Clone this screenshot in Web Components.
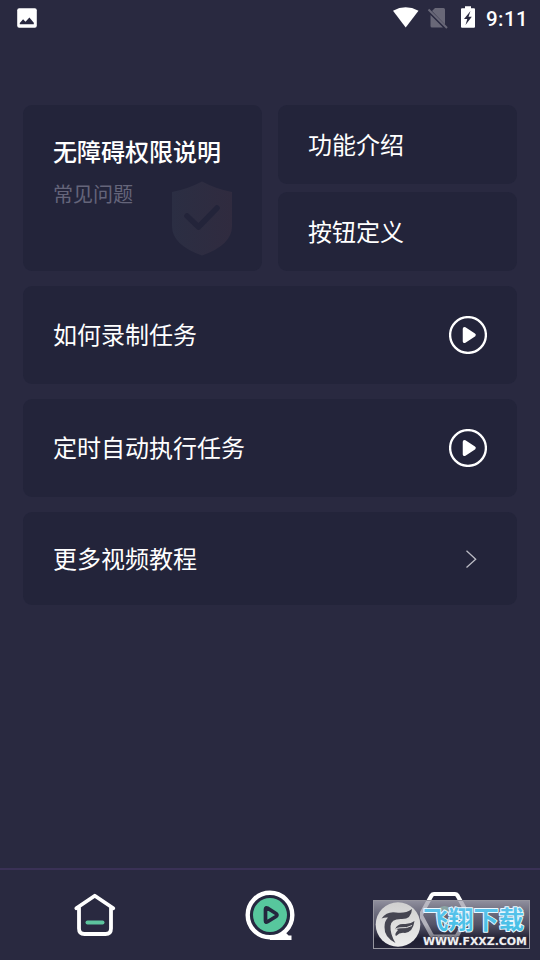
<!DOCTYPE html>
<html lang="zh-CN">
<head>
<meta charset="utf-8">
<title>教程</title>
<style>
html,body{margin:0;height:100%;background:#292940}
body{font-family:"Noto Sans CJK SC",sans-serif;color:#fff;overflow:hidden}
</style>
</head>
<body>
<tutorial-app></tutorial-app>
<script>
function define(name, html) {
  const template = document.createElement('template');
  template.innerHTML = html;
  customElements.define(name, class extends HTMLElement {
    constructor() {
      super();
      this.attachShadow({mode: 'open'}).append(template.content.cloneNode(true));
    }
  });
}

define('status-bar', `
<style>
:host{display:flex;height:36px;box-sizing:border-box;padding:0 12px 0 17px;align-items:center;justify-content:space-between}
svg{display:block}
.right{display:flex;align-items:center}
.time{font:500 20.5px/36px Roboto,sans-serif;letter-spacing:.4px;margin-left:10px;padding-top:1px;height:35px}
</style>
<svg width="20" height="20" viewBox="0 0 20 20"><rect x=".2" y=".2" width="19.6" height="19.6" rx="2" fill="#fff"/><path d="M2.8 16.2V15l3.3-3.7 2.4 2.5 3.9-4.4 4.4 5.3v1.5z" fill="#292940"/></svg>
<div class="right">
<svg width="83" height="24" viewBox="0 0 83 24">
<path d="M-.5 4.2Q12-2.500 25 4.200L12.200 21Z" transform="translate(.5 .5)" fill="#fff"/>
<path d="M39 5L42 2H50.500q1.500 0 1.500 1.500V18.500zM37.500 9l12.500 12.500H39q-1.500 0-1.500-1.500z" fill="#696878"/>
<path d="M35.500 3.500l18.500 18.500" stroke="#696878" stroke-width="1.900"/>
<path d="M69 2.200h3V.2h6v2h3q1 0 1 1v17.600q0 1-1 1H69q-1 0-1-1V3.200q0-1 1-1z" fill="#fff"/>
<path d="M77.500 5L71 13h3.300L72.500 19l6.300-8.300h-3.300z" fill="#292940"/>
</svg><span class="time">9:11</span></div>`);

define('tile-card', `
<style>
:host{display:flex;align-items:center;justify-content:space-between;box-sizing:border-box;padding:0 30px;border-radius:9px;background:#23243a;font-size:24px;line-height:34px}
.label{padding-bottom:2px}
</style><div class="label"><slot></slot></div><slot name="icon"></slot>`);

define('feature-card', `
<style>
:host{display:block;position:relative;box-sizing:border-box;padding:28px 30px;border-radius:9px;background:#23243a}
.title{font-size:24px;line-height:36px;font-weight:500}
.sub{font-size:20px;line-height:30px;color:#65657a;margin-top:10px}
svg{position:absolute;left:148px;top:76px}
</style>
<div class="title"><slot></slot></div><div class="sub"><slot name="sub"></slot></div>
<svg width="62" height="76" viewBox="0 0 62 76"><defs><linearGradient id="g"><stop stop-color="#2b2e43"/><stop offset="1" stop-color="#302b3f"/></linearGradient></defs>
<path d="M31 .5Q45 8 61 11V45Q61 64 31 74.500Q1 64 1 45V11Q17 8 31 .5Z" fill="url(#g)"/><path d="M16 35L27.500 46L46 27" fill="none" stroke="#23243a" stroke-width="5.500" stroke-linecap="round" stroke-linejoin="round"/></svg>`);

define('play-icon', `
<style>:host{display:block;width:38px;height:38px}svg{display:block}</style>
<svg width="38" height="38" viewBox="0 0 38 38"><circle cx="19" cy="19" r="17.900" fill="none" stroke="#fff" stroke-width="2.300"/><path d="M15.500 12.800L25 19L15.500 25.200Z" fill="#fff" stroke="#fff" stroke-width="3.500" stroke-linejoin="round"/></svg>`);

define('chevron-icon', `
<style>:host{display:block;margin-right:10px}svg{display:block}</style>
<svg width="12" height="18" viewBox="0 0 12 18"><path d="M1.500 .8L10.700 9.200L1.500 17.500" fill="none" stroke="#bbbbc4" stroke-width="1.300"/></svg>`);

define('site-mark', `
<style>
:host{display:block;position:absolute;left:373px;top:30px;width:157px;height:49px}
svg{display:block;overflow:visible}
</style>
<svg width="157" height="49" viewBox="0 0 157 49">
<defs><linearGradient id="bg" x2="0" y2="1"><stop stop-color="#aaa9b5" stop-opacity=".8"/><stop offset=".5" stop-color="#777687" stop-opacity=".55"/><stop offset=".8" stop-color="#171627" stop-opacity=".6"/><stop offset="1" stop-color="#222033" stop-opacity=".6"/></linearGradient>
<linearGradient id="disc" x2="0" y2="1"><stop stop-color="#cfcfcf"/><stop offset="1" stop-color="#ededed"/></linearGradient>
<linearGradient id="blue" x2="0" y2="1"><stop stop-color="#62c4ee"/><stop offset="1" stop-color="#40bee3"/></linearGradient></defs>
<rect x=".5" y=".5" width="156" height="48" fill="url(#bg)" stroke="#96959f"/>
<circle cx="25" cy="24.500" r="22.300" fill="url(#disc)"/>
<path d="M8.500 18.500Q14 11 23 12.500Q32 14 39 9Q38.500 19 29 19Q18 18.500 17.500 26Q17 34 22.500 43Q11 37 11.500 27Q11.500 21 15 17.500Q12 17 8.500 18.500Z" fill="#454551"/>
<path d="M22 29.500Q24 23.500 31 24Q37 24.500 41.500 21Q40 32 32 33Q27 32 23 36Q21 34 25 30Q23 28.500 22 29.500Z" fill="#454551"/>
<path d="M19.500 35Q20 28 27 27.800Q34 28.500 39 25.500" fill="none" stroke="#ddd" stroke-width="1"/>
<text x="50" y="29" textLength="101" lengthAdjust="spacingAndGlyphs" font-family="Noto Sans CJK SC,sans-serif" font-size="25" font-weight="700" fill="url(#blue)" stroke="#e9f8ff" stroke-width="2" paint-order="stroke" stroke-linejoin="round">飞翔下载</text>
<text x="50" y="44.500" textLength="104" lengthAdjust="spacingAndGlyphs" font-family="DejaVu Sans,sans-serif" font-size="10.500" font-weight="700" fill="#f0f0f2" stroke="#454354" stroke-width="1" paint-order="stroke">WWW.FXXZ.COM</text>
</svg>`);

define('nav-bar', `
<style>
:host{display:grid;grid-template-columns:190px 160px 190px;position:relative;height:92px;box-sizing:border-box;border-top:2px solid #3a3156}
.item{display:flex;justify-content:center;padding-top:20px}
svg{display:block}
</style>
<div class="item"><svg width="50" height="52" viewBox="0 0 50 52"><g fill="none" stroke="#fff" stroke-width="3.800" stroke-linejoin="round" stroke-linecap="round"><path d="M9 18V38.500Q9 44 14.500 44H35.500Q41 44 41 38.500V18"/><path d="M6.300 18.300L24.800 5.700L43.300 18.300"/></g><path d="M17.500 32.500H32.500" stroke="#5dc49e" stroke-width="4" stroke-linecap="round"/></svg></div>
<div class="item"><svg width="50" height="52" viewBox="0 0 50 52"><circle cx="25" cy="25" r="20" fill="#252840"/><circle cx="25" cy="25" r="17" fill="#57c79d"/><circle cx="25" cy="25" r="22.300" fill="none" stroke="#fff" stroke-width="4.400"/><path d="M25 47.800H46.500M38 43L42 47" fill="none" stroke="#fff" stroke-width="4.500"/><path d="M20.500 19.200Q20.500 17 22.500 18.200L31 23.500Q33 25 31 26.500L22.500 31.800Q20.500 33 20.500 30.800Z" fill="none" stroke="#24273e" stroke-width="3.700" stroke-linejoin="round"/></svg></div>
<div class="item"><svg width="50" height="52" viewBox="0.500 1 50 52"><path d="M14.500 5H35.500Q37 5 38 6.500L48 24.500Q49 26 48 27.500L38 46Q37 47.500 35.500 47.500H14.500Q13 47.500 12 46L2 27.500Q1 26 2 24.500L12 6.500Q13 5 14.500 5Z" fill="none" stroke="#fff" stroke-width="4.200"/><circle cx="25" cy="26" r="7" fill="none" stroke="#5dc49e" stroke-width="4"/></svg></div>
<site-mark></site-mark>`);

define('tutorial-app', `
<style>
:host{display:flex;flex-direction:column;width:540px;height:960px;background:#292940}
main{flex:1;padding:69px 23px 0}
.top{display:grid;grid-template-columns:239px 239px;column-gap:16px;height:166px}
.stack{display:grid;grid-template-rows:79px 79px;row-gap:8px}
.list{display:grid;grid-template-rows:98px 98px 93px;gap:15px;margin-top:15px}
</style>
<status-bar></status-bar>
<main>
<div class="top"><feature-card>无障碍权限说明<span slot="sub">常见问题</span></feature-card>
<div class="stack"><tile-card>功能介绍</tile-card><tile-card>按钮定义</tile-card></div></div>
<div class="list">
<tile-card>如何录制任务<play-icon slot="icon"></play-icon></tile-card>
<tile-card>定时自动执行任务<play-icon slot="icon"></play-icon></tile-card>
<tile-card>更多视频教程<chevron-icon slot="icon"></chevron-icon></tile-card>
</div>
</main>
<nav-bar></nav-bar>`);
</script>
</body>
</html>
